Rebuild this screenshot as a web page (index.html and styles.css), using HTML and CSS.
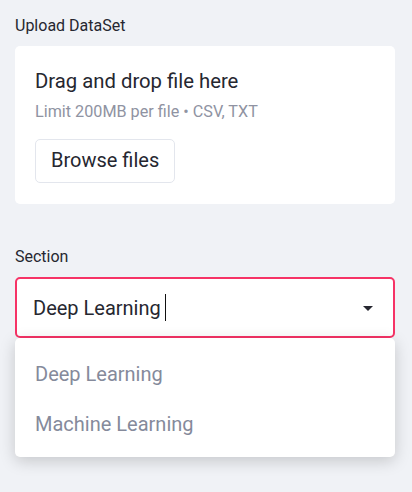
FILE: index.html
```html
<!DOCTYPE html>
<html lang="en">
<head>
<meta charset="utf-8">
<title>Upload</title>
<link rel="stylesheet" href="styles.css">
</head>
<body>
<main class="page">
  <section class="field">
    <div class="label">Upload DataSet</div>
    <div class="uploader">
      <div class="drop-title">Drag and drop file here</div>
      <div class="drop-limit">Limit 200MB per file • CSV, TXT</div>
      <button class="browse" type="button">Browse files</button>
    </div>
  </section>

  <section class="field field-select">
    <div class="label">Section</div>
    <div class="select-wrap">
      <div class="select">
        <span class="select-value">Deep Learning</span><span class="caret"></span>
        <svg class="arrow" width="10" height="5" viewBox="0 0 10 5" aria-hidden="true"><path d="M0 0h10L5 5z" fill="#262730"/></svg>
      </div>
      <ul class="menu">
        <li class="menu-item">Deep Learning</li>
        <li class="menu-item">Machine Learning</li>
      </ul>
    </div>
  </section>
</main>
</body>
</html>
```

FILE: styles.css
```css
* { box-sizing: border-box; }

html, body {
  margin: 0;
  padding: 0;
  background: #f0f2f6;
  font-family: Roboto, "Liberation Sans", sans-serif;
  color: #262730;
}

body {
  min-height: 492px;
}

.page {
  padding: 14px 17px 0 15px;
  display: flex;
  flex-direction: column;
}

.label {
  font-size: 16px;
  line-height: 24px;
  color: #262730;
}

.uploader {
  margin-top: 8px;
  background: #ffffff;
  border-radius: 5px;
  padding: 20px 20px 21px 20px;
  display: flex;
  flex-direction: column;
  align-items: flex-start;
}

.drop-title {
  font-size: 20.3px;
  line-height: 30px;
}

.drop-limit {
  margin-top: 4px;
  font-size: 16.2px;
  line-height: 24px;
  color: #8f93a2;
}

.browse {
  margin-top: 15px;
  height: 44px;
  padding: 0 15px 3px;
  background: #ffffff;
  border: 1px solid #e3e6ed;
  border-radius: 5px;
  font-family: inherit;
  font-size: 20px;
  line-height: 30px;
  color: #262730;
}

.field-select {
  margin-top: 41px;
}

.select-wrap {
  margin-top: 8px;
  display: flex;
  flex-direction: column;
}

.select {
  height: 61px;
  background: #ffffff;
  border: 2px solid #f63366;
  border-radius: 5px;
  padding: 0 20px 0 16px;
  display: flex;
  align-items: center;
}

.select-value {
  font-size: 20px;
  line-height: 30px;
  color: #262730;
}

.caret {
  width: 1px;
  height: 27px;
  margin-left: 4px;
  background: #111111;
}

.arrow {
  margin-left: auto;
  margin-top: 1px;
}

.menu {
  position: relative;
  z-index: 2;
  margin: 0;
  padding: 11px 0 8px;
  list-style: none;
  background: #ffffff;
  border-radius: 5px;
  box-shadow: 0 4px 16px rgba(0, 0, 0, 0.18);
}

.menu-item {
  height: 50px;
  padding: 0 20px;
  display: flex;
  align-items: center;
  font-size: 20px;
  line-height: 30px;
  color: #858a9b;
}
```
